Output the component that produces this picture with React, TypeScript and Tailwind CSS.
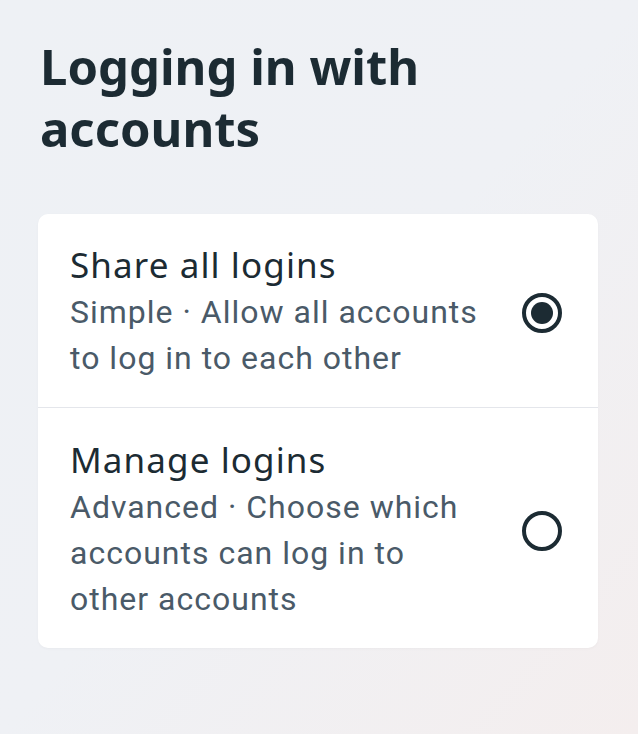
import React from "react";

function Radio({ checked }: { checked: boolean }) {
  return (
    <div className="flex h-[40px] w-[40px] shrink-0 items-center justify-center rounded-full border-[4px] border-[#1c2b33]">
      {checked && <div className="h-[22px] w-[22px] rounded-full bg-[#1c2b33]" />}
    </div>
  );
}

function Option({
  title,
  desc,
  checked,
  className,
}: {
  title: string;
  desc: string;
  checked: boolean;
  className: string;
}) {
  return (
    <div className={`flex items-center justify-between pl-[32px] pr-[36px] ${className}`}>
      <div className="w-[420px]">
        <div className="text-[35px] leading-[40px] tracking-[1.1px] text-[#1c2b33] [font-family:'Noto_Sans',sans-serif]">
          {title}
        </div>
        <div className="mt-[4px] text-[32px] leading-[46px] tracking-[1px] text-[#4a5a68] [font-family:Roboto,sans-serif]">
          {desc}
        </div>
      </div>
      <Radio checked={checked} />
    </div>
  );
}

export default function App() {
  return (
    <div className="h-[734px] w-[638px] overflow-hidden bg-gradient-to-br from-[#eef1f5] via-[#eff1f5] to-[#f4eeee] px-[38px] pt-[35px]">
      <h1 className="pl-[2px] text-[49px] font-bold leading-[62px] text-[#1c2b33] [font-family:'Noto_Sans',sans-serif]">
        Logging in with
        <br />
        accounts
      </h1>
      <div className="mt-[55px] w-[560px] overflow-hidden rounded-[10px] bg-white shadow-[0_1px_3px_rgba(0,0,0,0.03)]">
        <Option
          title="Share all logins"
          desc="Simple · Allow all accounts to log in to each other"
          checked
          className="pt-[31px] pb-[26px] border-b border-[#e4e6eb]"
        />
        <Option
          title="Manage logins"
          desc="Advanced · Choose which accounts can log in to other accounts"
          checked={false}
          className="pt-[32px] pb-[26px]"
        />
      </div>
    </div>
  );
}
